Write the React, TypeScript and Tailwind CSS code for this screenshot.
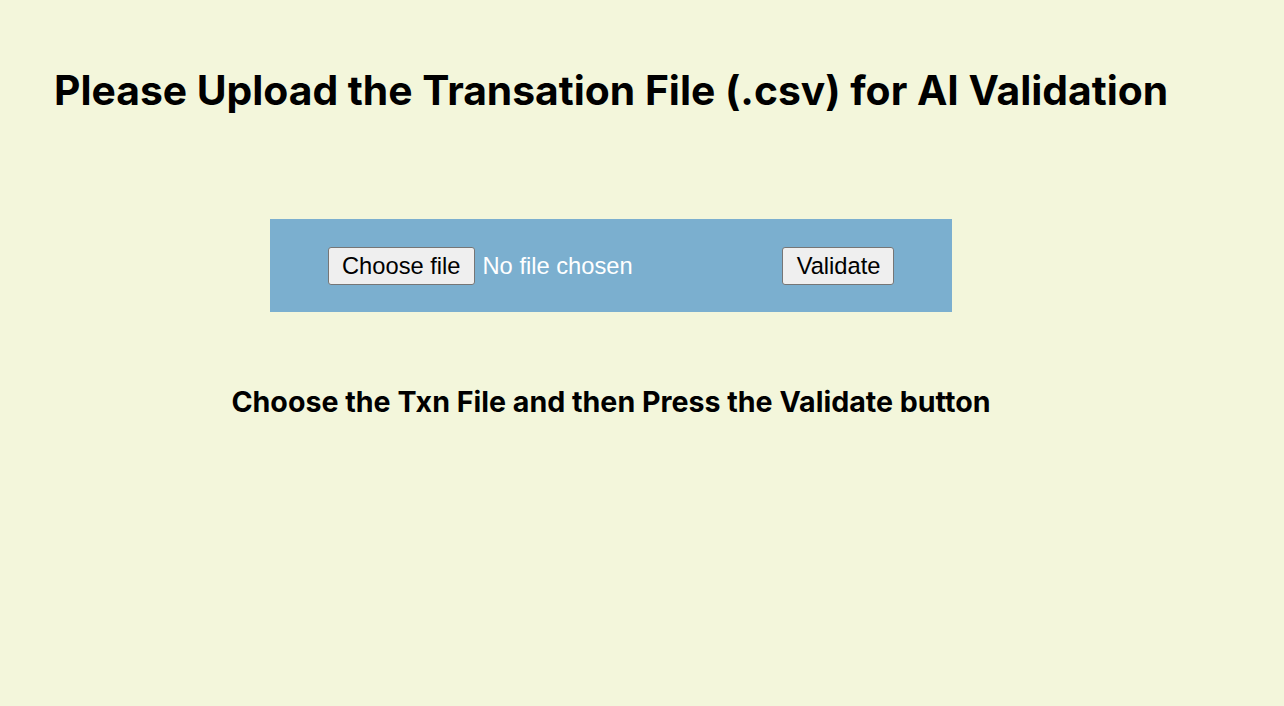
export default function App() {
  return (
    <div className="min-h-screen w-full bg-[#f3f6db] font-['Inter',sans-serif] text-black">
      <div className="w-[1222px] flex flex-col items-center">
        <h1 className="self-start ml-[54px] mt-[66px] text-[40.8px] font-bold leading-[48px]">
          Please Upload the Transation File (.csv) for AI Validation
        </h1>

        <div className="mt-[105px] w-[682px] h-[93px] bg-[#7bafcf] flex items-center pl-[58px] font-['Liberation_Sans',Arial,sans-serif] text-[23.7px]">
          <button className="h-[38px] px-[13px] pt-[2px] bg-[#efefef] border border-[#767676] rounded-[3px] leading-none">
            Choose file
          </button>
          <span className="ml-[8px] pt-[2px] text-white">No file chosen</span>
          <button className="ml-[149px] h-[38px] pl-[14px] pr-[13px] pt-[2px] bg-[#efefef] border border-[#767676] rounded-[3px] leading-none">
            Validate
          </button>
        </div>

        <h2 className="mt-[72px] text-[28.6px] font-bold leading-[36px]">
          Choose the Txn File and then Press the Validate button
        </h2>
      </div>
    </div>
  );
}
